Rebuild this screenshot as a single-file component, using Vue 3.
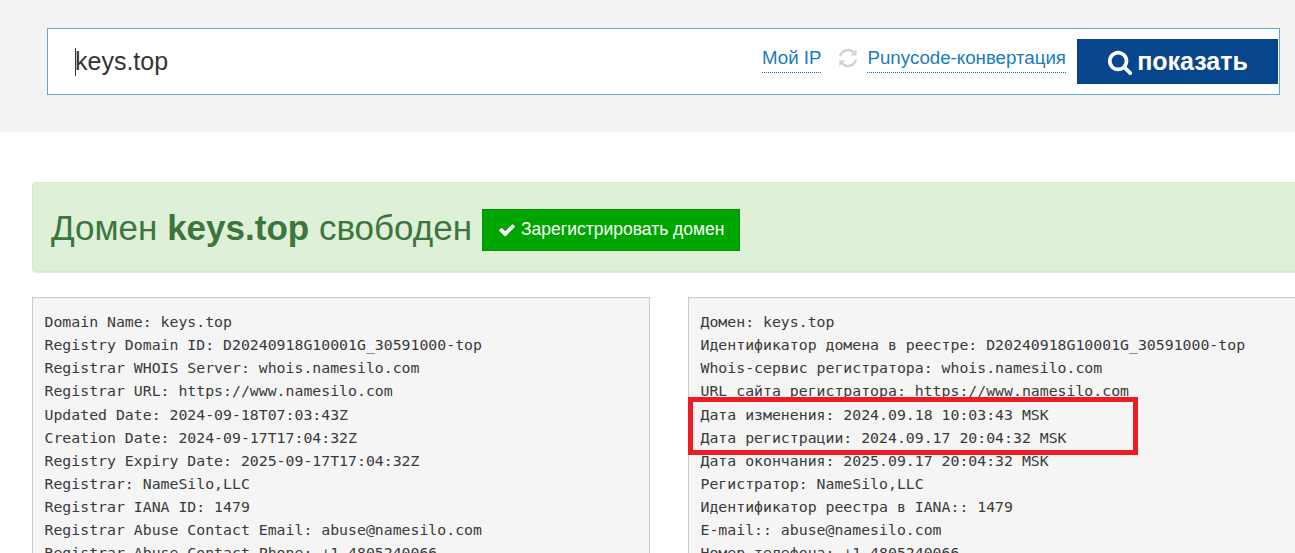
<script setup>
const left = [
  'Domain Name: keys.top',
  'Registry Domain ID: D20240918G10001G_30591000-top',
  'Registrar WHOIS Server: whois.namesilo.com',
  'Registrar URL: https://www.namesilo.com',
  'Updated Date: 2024-09-18T07:03:43Z',
  'Creation Date: 2024-09-17T17:04:32Z',
  'Registry Expiry Date: 2025-09-17T17:04:32Z',
  'Registrar: NameSilo,LLC',
  'Registrar IANA ID: 1479',
  'Registrar Abuse Contact Email: abuse@namesilo.com',
  'Registrar Abuse Contact Phone: +1.4805240066'
]
const right = [
  'Домен: keys.top',
  'Идентификатор домена в реестре: D20240918G10001G_30591000-top',
  'Whois-сервис регистратора: whois.namesilo.com',
  'URL сайта регистратора: https://www.namesilo.com',
  'Дата изменения: 2024.09.18 10:03:43 MSK',
  'Дата регистрации: 2024.09.17 20:04:32 MSK',
  'Дата окончания: 2025.09.17 20:04:32 MSK',
  'Регистратор: NameSilo,LLC',
  'Идентификатор реестра в IANA:: 1479',
  'E-mail:: abuse@namesilo.com',
  'Номер телефона: +1.4805240066'
]
</script>

<template>
  <div class="page">
    <header class="top">
      <div class="search">
        <div class="query"><span class="caret"></span>keys.top</div>
        <a class="link">Мой IP</a>
        <svg class="refresh" viewBox="0 0 20 20">
          <path class="arc" d="M2.2 8.2A8 8 0 0 1 15.6 4.3" />
          <path class="arc" d="M17.8 11.8A8 8 0 0 1 4.4 15.7" />
          <path class="tip" d="M18.6 1.6V7.6H12.6Z" />
          <path class="tip" d="M1.4 18.4V12.4H7.4Z" />
        </svg>
        <a class="link">Punycode-конвертация</a>
        <button class="show">
          <svg class="search-icon" viewBox="0 0 1792 1792"><path d="M1216 832q0-185-131.5-316.5t-316.5-131.5-316.5 131.5-131.5 316.5 131.5 316.5 316.5 131.5 316.5-131.5 131.5-316.5zm512 832q0 52-38 90t-90 38q-54 0-90-38l-343-342q-179 124-399 124-143 0-273.5-55.5t-225-150-150-225-55.5-273.5 55.5-273.5 150-225 225-150 273.5-55.5 273.5 55.5 225 150 150 225 55.5 273.5q0 220-124 399l343 343q37 37 37 90z"/></svg>
          <span>показать</span>
        </button>
      </div>
    </header>

    <main class="content">
      <section class="alert">
        <h1>Домен <b>keys.top</b> свободен</h1>
        <a class="register">
          <svg class="check" viewBox="0 0 1792 1792"><path d="M1671 566q0 40-28 68l-724 724-136 136q-28 28-68 28t-68-28l-136-136-362-362q-28-28-28-68t28-68l136-136q28-28 68-28t68 28l294 295 656-657q28-28 68-28t68 28l136 136q28 28 28 68z"/></svg>
          Зарегистрировать домен
        </a>
      </section>

      <div class="columns">
        <pre class="whois"><div v-for="line in left" :key="line">{{ line }}</div></pre>
        <pre class="whois"><div v-for="line in right" :key="line">{{ line }}</div></pre>
      </div>
    </main>
    <div class="mark"></div>
  </div>
</template>

<style>
html, body { margin: 0; overflow: hidden; background: #fff; }
</style>

<style scoped>
.page {
  position: relative;
  width: 1295px;
  height: 553px;
  overflow: hidden;
  font-family: "Liberation Sans", Arial, sans-serif;
}
.top {
  background: #f3f3f3;
  height: 132px;
  padding: 28px 15px 0 47px;
  box-sizing: border-box;
}
.search {
  height: 67px;
  box-sizing: border-box;
  border: 1px solid #5fa8d3;
  background: #fff;
  display: flex;
  align-items: center;
  padding: 0 1px 0 27px;
}
.query {
  position: relative;
  flex: 1;
  font-size: 25px;
  line-height: 28px;
  color: #333;
  margin-top: -2px;
}
.caret {
  position: absolute;
  left: 0;
  top: 1px;
  width: 1px;
  height: 28px;
  background: #333;
}
.link {
  color: #1a7bbd;
  font-size: 18.7px;
  line-height: 25px;
  padding-bottom: 2px;
  border-bottom: 1px dotted #0073c4;
  margin-top: -6px;
  white-space: nowrap;
}
.refresh {
  width: 20px;
  height: 20px;
  margin: 0 9px 8px 17px;
}
.arc {
  fill: none;
  stroke: #d2d2d2;
  stroke-width: 2.4;
}
.tip {
  fill: #d2d2d2;
}
.show {
  width: 201px;
  height: 45px;
  margin-left: 11px;
  border: 0;
  background: #07468c;
  color: #fff;
  font: bold 25px "Liberation Sans", Arial, sans-serif;
  display: flex;
  align-items: center;
  justify-content: center;
  gap: 4px;
  padding: 0;
}
.search-icon {
  width: 26px;
  height: 26px;
  fill: #fff;
}
.content {
  padding: 50px 0 0 32px;
  width: 1500px;
}
.alert {
  height: 90px;
  box-sizing: border-box;
  background: #dff0d8;
  border: 1px solid #d6e9c6;
  border-radius: 4px;
  box-shadow: 0 1px 1px rgba(0,0,0,.1);
  display: flex;
  align-items: center;
  padding-left: 18px;
  gap: 10px;
}
h1 {
  margin: 2px 0 0;
  font-size: 35px;
  font-weight: 400;
  color: #3c763d;
  white-space: nowrap;
}
.register {
  display: flex;
  align-items: center;
  gap: 5px;
  box-sizing: border-box;
  width: 258px;
  height: 42px;
  margin-top: 6px;
  padding: 0 0 1px 15px;
  background: #00a600;
  border: 1px solid #059105;
  color: #fff;
  font-size: 17.5px;
  white-space: nowrap;
}
.check {
  width: 18px;
  height: 18px;
  fill: #fff;
}
.columns {
  display: grid;
  grid-template-columns: 618px 1fr;
  gap: 38px;
  margin-top: 25px;
}
.whois {
  margin: 0;
  height: 400px;
  box-sizing: border-box;
  padding: 12px 11px 12px 11.5px;
  background: #f5f5f5;
  border: 1px solid #ccc;
  font-family: "DejaVu Sans Mono", "Liberation Mono", monospace;
  font-size: 14.83px;
  line-height: 23.14px;
  color: #3a3a3a;
  overflow: hidden;
}
.mark {
  position: absolute;
  left: 688px;
  top: 397px;
  width: 450px;
  height: 58px;
  box-sizing: border-box;
  border: 5px solid #ed1c24;
}
</style>
